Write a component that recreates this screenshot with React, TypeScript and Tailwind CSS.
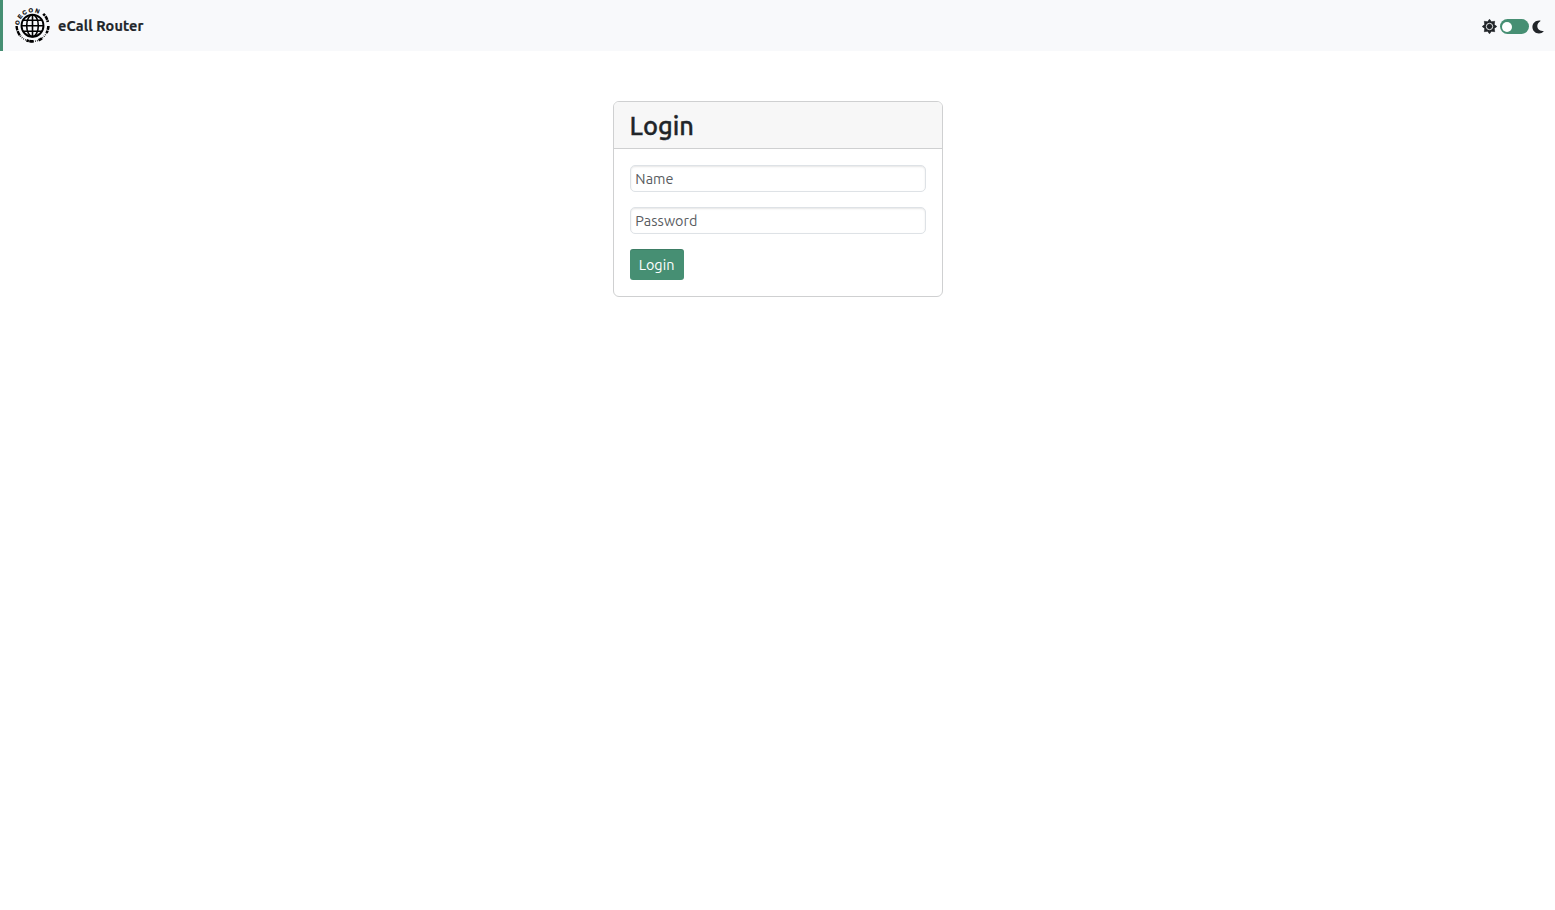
const letters = [
  { char: "O", angle: -79 },
  { char: "E", angle: -54 },
  { char: "C", angle: -31 },
  { char: "O", angle: -6 },
  { char: "N", angle: 19 },
];

function Logo() {
  return (
    <svg
      className="size-9 overflow-visible"
      viewBox="0 0 36 36"
      fill="none"
      stroke="#000"
    >
      <circle cx="18.5" cy="17.7" r="11" strokeWidth="1.9" />
      <ellipse cx="18.5" cy="17.7" rx="5.8" ry="11" strokeWidth="1.6" />
      <path
        d="M18.5 6.7v22M7.5 17.7h22M8.9 12.2h19.2M8.9 23.2h19.2"
        strokeWidth="1.6"
      />
      <path
        d="M29.2 5.8l1.8 1.8M31.5 8.3A15.9 15.9 0 0 1 33.8 14M34.4 18A15.9 15.9 0 0 1 32.5 25M28 30.2A15.9 15.9 0 0 1 24.5 32.2M19.5 33.4A15.9 15.9 0 0 1 12.5 32.2"
        strokeWidth="2.6"
        strokeDasharray="4 0.6"
      />
      <path
        d="M2.6 18A15.9 15.9 0 0 0 6.5 28"
        strokeWidth="2.4"
        strokeDasharray="4.5 0.8"
      />
      <path
        d="M6.5 28A15.9 15.9 0 0 0 32.5 25"
        strokeWidth="1.6"
        strokeDasharray="0.7 1.3"
      />
      {letters.map((item) => (
        <text
          key={item.angle}
          x="18.5"
          y="4.2"
          transform={`rotate(${item.angle} 18.5 17.5)`}
          textAnchor="middle"
          fill="#000"
          stroke="#000"
          strokeWidth="0.2"
          className="font-['Liberation_Sans'] text-[5.8px] font-bold"
        >
          {item.char}
        </text>
      ))}
    </svg>
  );
}

function SunIcon() {
  return (
    <svg className="size-[15px]" viewBox="-7.5 -7.5 15 15" fill="currentColor">
      <path
        d="M0-7.3L1.9-4.8L5.2-5.2L4.8-1.9L7.3 0L4.8 1.9L5.2 5.2L1.9 4.8L0 7.3L-1.9 4.8L-5.2 5.2L-4.8 1.9L-7.3 0L-4.8-1.9L-5.2-5.2L-1.9-4.8Z"
        stroke="currentColor"
        strokeWidth="0.6"
      />
      <circle r="3.2" fill="none" stroke="#f8f9fb" strokeWidth="0.9" />
    </svg>
  );
}

function MoonIcon() {
  return (
    <svg
      className="ml-[3px] h-[14px] w-[12px]"
      viewBox="0 0 12 14"
      fill="currentColor"
    >
      <path d="M7.1 0.5C3.3 0.5 0.4 3.4 0.4 7S3.3 13.5 7 13.5C8.9 13.5 10.5 12.7 11.6 11.5C11.8 11.2 11.6 10.9 11.2 10.9C7.7 11.3 5.3 9 5.3 6.1C5.3 4 6.5 2.2 8.3 1.2C8.6 1 8.5 0.6 8.2 0.6Z" />
    </svg>
  );
}

function Navbar() {
  return (
    <nav className="flex h-[51px] w-full items-center justify-between border-l-[3px] border-[#468f73] bg-[#f8f9fb] pl-[11px] pr-[11px]">
      <div className="flex items-center">
        <Logo />
        <span className="ml-2 text-[14.4px] font-bold leading-5 tracking-[0.13px] [-webkit-text-stroke:0.2px]">
          eCall Router
        </span>
      </div>
      <div className="flex items-center pt-[2px]">
        <SunIcon />
        <div className="ml-[3px] flex h-[15px] w-[29px] items-center rounded-full bg-[#468f73] px-[2px]">
          <div className="size-[10px] rounded-full bg-white" />
        </div>
        <MoonIcon />
      </div>
    </nav>
  );
}

export default function App() {
  return (
    <div className="min-h-screen w-full bg-white font-['Ubuntu','Noto_Sans',sans-serif] text-[#212529]">
      <Navbar />
      <div className="ml-[613px] mt-[50px] w-[330px] rounded-md border border-[#cfd0d1]">
        <div className="flex h-[47px] items-center rounded-t-[5px] border-b border-[#cfd0d1] bg-[#f7f7f7] px-4">
          <h1 className="-ml-[0.4px] pt-px text-[25.4px] font-medium leading-[30px] [-webkit-text-stroke:0.35px]">
            Login
          </h1>
        </div>
        <form className="flex flex-col items-start px-4 pb-4 pt-4">
          <input
            type="text"
            placeholder="Name"
            className="h-[27px] w-full rounded-[5px] border border-[#dee2e6] px-[4.3px] text-[14.4px] tracking-[0.06px] shadow-[inset_0_1px_2px_rgba(0,0,0,0.1)] outline-none placeholder:text-[#595c5f]"
          />
          <input
            type="password"
            placeholder="Password"
            className="mt-[15px] h-[27px] w-full rounded-[5px] border border-[#dee2e6] px-[4.3px] text-[14.4px] tracking-[0.06px] shadow-[inset_0_1px_2px_rgba(0,0,0,0.1)] outline-none placeholder:text-[#595c5f]"
          />
          <button
            type="button"
            className="mt-[15px] h-[31px] w-[54px] rounded-[3px] bg-[#468f73] pr-px pt-[2px] text-[14.4px] text-white shadow-[inset_0_1px_0_rgba(0,0,0,0.12)]"
          >
            Login
          </button>
        </form>
      </div>
    </div>
  );
}
